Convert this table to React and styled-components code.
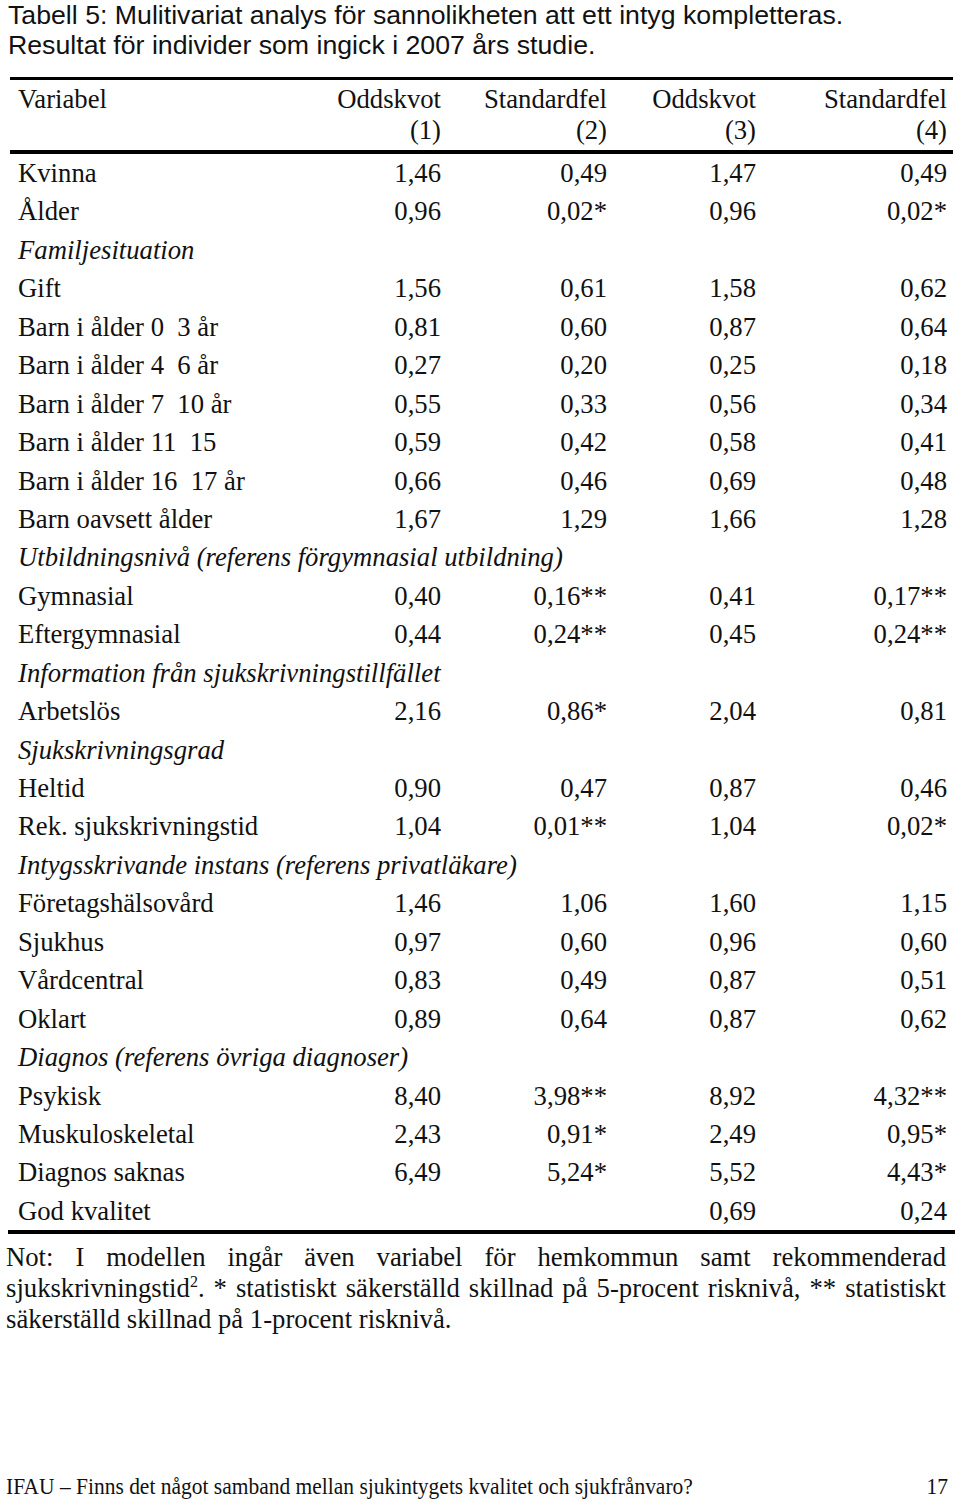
import React from "react";
import styled, { createGlobalStyle } from "styled-components";

const Global = createGlobalStyle`
  html, body { margin: 0; padding: 0; background: #fff; }
  body { color: #000; }
`;

const Page = styled.div`
  width: 960px;
  min-height: 1502px;
  display: flex;
  flex-direction: column;
  box-sizing: border-box;
`;

const Title = styled.div`
  font-family: "Liberation Sans", Arial, sans-serif;
  font-size: 26.7px;
  line-height: 30px;
  padding-left: 8px;
  color: #111;
`;

const Table = styled.div`
  margin: 17px 0 0 10px;
  width: 943px;
  display: grid;
  grid-template-columns: 280px 157px 166px 149px 191px;
  font-family: "Liberation Serif", "Times New Roman", serif;
  font-size: 26.7px;
  color: #111;
`;

const Rule = styled.div`
  grid-column: 1 / -1;
  height: ${(p) => p.$h || 3}px;
  background: #000;
  margin-left: ${(p) => p.$ml || 0}px;
  margin-right: ${(p) => p.$mr || 0}px;
`;

const HeadCell = styled.div`
  padding: 4px ${(p) => (p.$left ? "0" : "6px")} 4px ${(p) => (p.$left ? "8px" : "0")};
  line-height: 31px;
  text-align: ${(p) => (p.$left ? "left" : "right")};
  white-space: nowrap;
`;

const Cell = styled.div`
  height: 38.44px;
  line-height: 38.44px;
  white-space: pre;
  text-align: ${(p) => (p.$left ? "left" : "right")};
  padding: ${(p) => (p.$left ? "0 0 0 8px" : "0 6px 0 0")};
`;

const GroupCell = styled.div`
  grid-column: 1 / -1;
  height: 38.44px;
  line-height: 38.44px;
  padding-left: 8px;
  font-style: italic;
  white-space: nowrap;
`;

const Note = styled.p`
  margin: 8px 0 0 6px;
  width: 940px;
  font-family: "Liberation Serif", "Times New Roman", serif;
  font-size: 26.7px;
  line-height: 31px;
  text-align: justify;
  color: #111;
  sup {
    font-size: 16px;
    line-height: 0;
  }
`;

const Footer = styled.div`
  margin-top: auto;
  display: flex;
  justify-content: space-between;
  align-items: baseline;
  padding: 0 12px 3px 6px;
  font-family: "Liberation Serif", "Times New Roman", serif;
  font-size: 24px;
  line-height: 26px;
  color: #111;
`;

const FooterText = styled.span`
  display: inline-block;
  transform: scaleX(0.895);
  transform-origin: left center;
  white-space: nowrap;
`;

const PageNo = styled.span`
  display: inline-block;
  transform: scaleX(0.895);
  transform-origin: right center;
`;

const rows = [
  ["Kvinna", "1,46", "0,49", "1,47", "0,49"],
  ["Ålder", "0,96", "0,02*", "0,96", "0,02*"],
  ["Familjesituation"],
  ["Gift", "1,56", "0,61", "1,58", "0,62"],
  ["Barn i ålder 0\u20023 år", "0,81", "0,60", "0,87", "0,64"],
  ["Barn i ålder 4\u20026 år", "0,27", "0,20", "0,25", "0,18"],
  ["Barn i ålder 7\u200210 år", "0,55", "0,33", "0,56", "0,34"],
  ["Barn i ålder 11\u200215", "0,59", "0,42", "0,58", "0,41"],
  ["Barn i ålder 16\u200217 år", "0,66", "0,46", "0,69", "0,48"],
  ["Barn oavsett ålder", "1,67", "1,29", "1,66", "1,28"],
  ["Utbildningsnivå (referens förgymnasial utbildning)"],
  ["Gymnasial", "0,40", "0,16**", "0,41", "0,17**"],
  ["Eftergymnasial", "0,44", "0,24**", "0,45", "0,24**"],
  ["Information från sjukskrivningstillfället"],
  ["Arbetslös", "2,16", "0,86*", "2,04", "0,81"],
  ["Sjukskrivningsgrad"],
  ["Heltid", "0,90", "0,47", "0,87", "0,46"],
  ["Rek. sjukskrivningstid", "1,04", "0,01**", "1,04", "0,02*"],
  ["Intygsskrivande instans (referens privatläkare)"],
  ["Företagshälsovård", "1,46", "1,06", "1,60", "1,15"],
  ["Sjukhus", "0,97", "0,60", "0,96", "0,60"],
  ["Vårdcentral", "0,83", "0,49", "0,87", "0,51"],
  ["Oklart", "0,89", "0,64", "0,87", "0,62"],
  ["Diagnos (referens övriga diagnoser)"],
  ["Psykisk", "8,40", "3,98**", "8,92", "4,32**"],
  ["Muskuloskeletal", "2,43", "0,91*", "2,49", "0,95*"],
  ["Diagnos saknas", "6,49", "5,24*", "5,52", "4,43*"],
  ["God kvalitet", "", "", "0,69", "0,24"],
];

export default function App() {
  return (
    <Page>
      <Global />
      <Title>
        Tabell 5: Mulitivariat analys för sannolikheten att ett intyg kompletteras.
        <br />
        Resultat för individer som ingick i 2007 års studie.
      </Title>
      <Table>
        <Rule $h={3} />
        <HeadCell $left>Variabel</HeadCell>
        <HeadCell>Oddskvot<br />(1)</HeadCell>
        <HeadCell>Standardfel<br />(2)</HeadCell>
        <HeadCell>Oddskvot<br />(3)</HeadCell>
        <HeadCell>Standardfel<br />(4)</HeadCell>
        <Rule $h={4} />
        {rows.map((r, i) =>
          r.length === 1 ? (
            <GroupCell key={i}>{r[0]}</GroupCell>
          ) : (
            <React.Fragment key={i}>
              <Cell $left>{r[0]}</Cell>
              <Cell>{r[1]}</Cell>
              <Cell>{r[2]}</Cell>
              <Cell>{r[3]}</Cell>
              <Cell>{r[4]}</Cell>
            </React.Fragment>
          )
        )}
        <Rule $h={4} $ml={-2} $mr={-2} />
      </Table>
      <Note>
        Not: I modellen ingår även variabel för hemkommun samt rekommenderad
        sjukskrivningstid<sup>2</sup>. * statistiskt säkerställd skillnad på
        5-procent risknivå, ** statistiskt säkerställd skillnad på 1-procent
        risknivå.
      </Note>
      <Footer>
        <FooterText>
          IFAU – Finns det något samband mellan sjukintygets kvalitet och sjukfrånvaro?
        </FooterText>
        <PageNo>17</PageNo>
      </Footer>
    </Page>
  );
}
